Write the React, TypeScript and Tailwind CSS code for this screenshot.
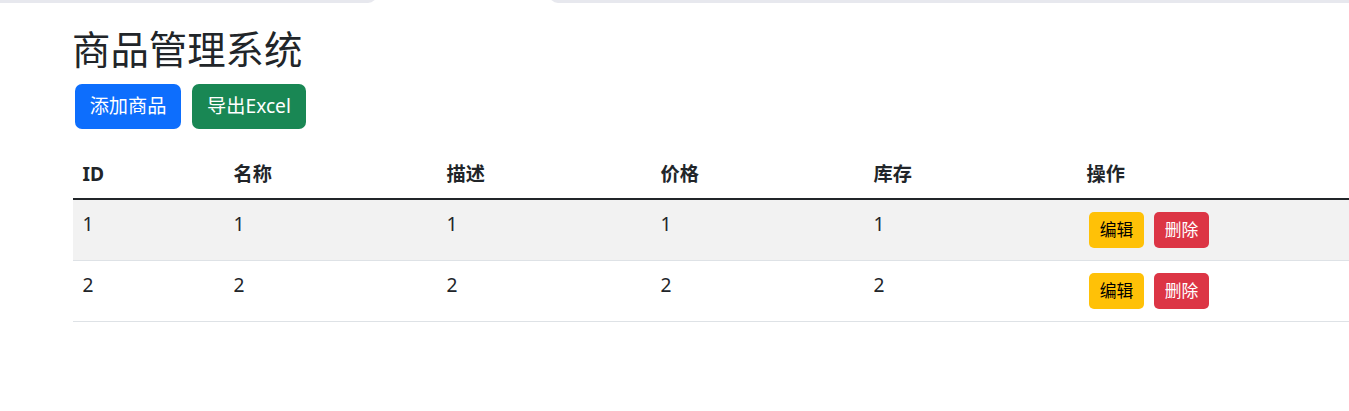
import React from "react";

const rows = [
  { id: "1", name: "1", desc: "1", price: "1", stock: "1" },
  { id: "2", name: "2", desc: "2", price: "2", stock: "2" },
];

export default function App() {
  return (
    <div className="min-h-[411px] w-[1349px] overflow-hidden bg-white text-[#212529] font-['Noto_Sans','Noto_Sans_CJK_SC',sans-serif]">
      {/* top strip */}
      <div className="flex h-[3px] items-end overflow-hidden">
        <div className="h-[10px] w-[377px] shrink-0 rounded-br-[9px] bg-[#e7e8ee]" />
        <div className="w-[172px] shrink-0" />
        <div className="h-[10px] flex-1 rounded-bl-[9px] bg-[#e7e8ee]" />
      </div>

      <div className="pl-[73px] pt-[24px]">
        <h2 className="mb-[12px] -ml-[1px] text-[38.4px] leading-[45px] font-normal">商品管理系统</h2>

        <div className="flex gap-[11px] pl-[2px]">
          <button className="flex h-[45px] w-[106px] items-center justify-center rounded-[7px] bg-[#0d6efd] text-[19.2px] leading-[28.8px] text-white">
            添加商品
          </button>
          <button className="flex h-[45px] w-[114px] items-center justify-center rounded-[7px] bg-[#198754] text-[19.2px] leading-[28.8px] text-white">
            导出Excel
          </button>
        </div>

        <table className="mt-[21px] w-[1276px] table-fixed border-collapse text-[19.2px] leading-[28.8px]">
          <colgroup>
            <col className="w-[151px]" />
            <col className="w-[213px]" />
            <col className="w-[214px]" />
            <col className="w-[213px]" />
            <col className="w-[213px]" />
            <col />
          </colgroup>
          <thead>
            <tr className="border-b-2 border-[#212529]">
              {["ID", "名称", "描述", "价格", "库存", "操作"].map((h) => (
                <th key={h} className="h-[48px] px-[9.6px] py-[9.6px] text-left align-top font-bold">
                  {h}
                </th>
              ))}
            </tr>
          </thead>
          <tbody>
            {rows.map((r, i) => (
              <tr key={r.id} className={`border-b border-[#dee2e6] ${i % 2 === 0 ? "bg-[#f2f2f2]" : "bg-white"}`}>
                <td className="px-[9.6px] pt-[9.6px] pb-[12px] align-top">{r.id}</td>
                <td className="px-[9.6px] pt-[9.6px] pb-[12px] align-top">{r.name}</td>
                <td className="px-[9.6px] pt-[9.6px] pb-[12px] align-top">{r.desc}</td>
                <td className="px-[9.6px] pt-[9.6px] pb-[12px] align-top">{r.price}</td>
                <td className="px-[9.6px] pt-[9.6px] pb-[12px] align-top">{r.stock}</td>
                <td className="pl-[12px] pr-[9.6px] pt-[12px] pb-[12px] align-top">
                  <div className="flex gap-[10px]">
                    <button className="flex h-[36px] w-[55px] items-center justify-center rounded-[5px] bg-[#ffc107] text-[16.8px] leading-[25px] text-black">
                      编辑
                    </button>
                    <button className="flex h-[36px] w-[55px] items-center justify-center rounded-[5px] bg-[#dc3545] text-[16.8px] leading-[25px] text-white">
                      删除
                    </button>
                  </div>
                </td>
              </tr>
            ))}
          </tbody>
        </table>
      </div>
    </div>
  );
}
